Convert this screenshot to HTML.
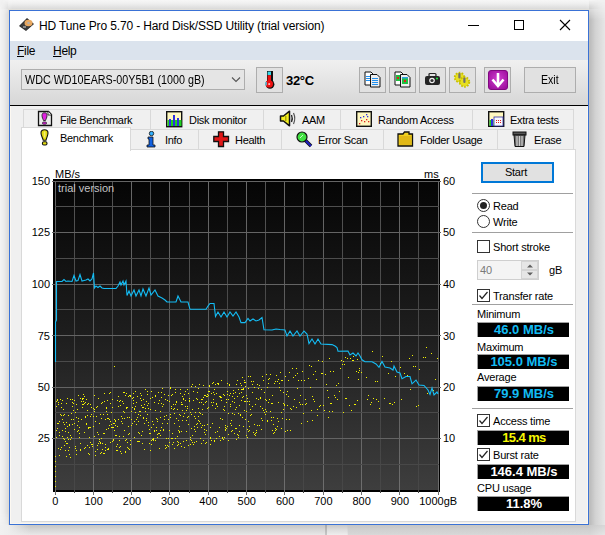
<!DOCTYPE html>
<html><head><meta charset="utf-8">
<style>
*{box-sizing:border-box;margin:0;padding:0}
html,body{width:605px;height:535px;overflow:hidden}
body{background:#f2f2f2;font-family:"Liberation Sans",sans-serif;font-size:12px;color:#000;position:relative}
.a{position:absolute}
.t{position:absolute;white-space:nowrap;line-height:1}
#win{position:absolute;left:9px;top:10px;width:580px;height:515px;border:1px solid #3a72d6;background:#f0f0f0;box-shadow:inset 1px 0 0 #fdf9f2,inset -1px -1px 0 #fbf7ef}
.tab{border:1px solid #d9d9d9;background:#f0f0f0}
.tl{font-size:11px;letter-spacing:-0.3px}
.cl{font-size:11px}
.sl{font-size:11px;letter-spacing:-0.2px}
.sep{left:472px;width:101px;height:1px;background:#a0a0a0}
.rad{width:13px;height:13px;border:1px solid #333;border-radius:50%;background:#fff}
.rad .dot{position:absolute;left:2px;top:2px;width:7px;height:7px;border-radius:50%;background:#222}
.chk{width:13px;height:13px;border:1px solid #333;background:#fff}
.chk svg{left:0;top:0}
.box{left:477px;width:92px;height:15px;background:#000;border-left:1px solid #a0a0a0;border-top:1px solid #a0a0a0}
.val{left:478px;width:92px;text-align:center;font-size:13px;font-weight:bold;letter-spacing:0px}
</style></head><body>
<div class="a" style="left:0;top:0;width:605px;height:9px;background:linear-gradient(#f7f7f7,#efefef 40%,#dadada);-webkit-mask-image:linear-gradient(to right,transparent 0px,#000 12px,#000 586px,transparent 602px);mask-image:linear-gradient(to right,transparent 0px,#000 12px,#000 586px,transparent 602px)"></div>
<div class="a" style="left:8px;top:9px;width:581px;height:1px;background:#e2dfd8"></div>
<div class="a" style="left:0;top:0;width:8px;height:535px;background:linear-gradient(to right,#f4f4f4,#ececec 50%,#dcdcdc);-webkit-mask-image:linear-gradient(transparent 0px,#000 14px,#000 512px,transparent 532px);mask-image:linear-gradient(transparent 0px,#000 14px,#000 512px,transparent 532px)"></div>
<div class="a" style="left:8px;top:9px;width:1px;height:516px;background:#dfdcd6"></div>
<div class="a" style="left:589px;top:0;width:16px;height:535px;background:linear-gradient(to right,#c2c0bb,#bdbdbd 8%,#d2d2d2 40%,#e6e6e6);-webkit-mask-image:linear-gradient(transparent 0px,#000 20px);mask-image:linear-gradient(transparent 0px,#000 20px)"></div>
<div class="a" style="left:0;top:525px;width:605px;height:10px;background:linear-gradient(#cbc9c3,#c9c9c9 12%,#d6d6d6 45%,#e8e8e8)"></div>
<div class="a" style="left:0;top:525px;width:30px;height:10px;background:linear-gradient(to right,#f1f1f1 0px,#eeeeee 8px,rgba(238,238,238,0) 30px)"></div>
<div class="a" style="left:589px;top:525px;width:16px;height:10px;background:linear-gradient(to bottom right,#c8c8c8,#e6e6e6)"></div>
<div class="a" style="left:325px;top:525px;width:2px;height:10px;background:rgba(0,0,0,0.14)"></div>
<div class="a" style="left:327px;top:525px;width:20px;height:10px;background:linear-gradient(rgba(255,255,255,0.05),rgba(255,255,255,0.25))"></div>
<div class="a" style="left:348px;top:525px;width:241px;height:10px;background:linear-gradient(rgba(0,0,0,0.0),rgba(0,0,0,0.07))"></div>
<div id="win"></div>
<!-- title bar -->
<div class="a" style="left:10px;top:11px;width:578px;height:30px;background:#fff"></div>
<svg class="a" style="left:18px;top:17px" width="17" height="15" viewBox="0 0 17 15">
 <polygon points="1,9 9,1 16,7 8,14" fill="#2a2a2a"/>
 <polygon points="2,9 9,2 15,7 8,13" fill="#3c3c3c"/>
 <ellipse cx="10.5" cy="6" rx="4" ry="3.3" fill="#e8a860"/>
 <ellipse cx="10.5" cy="6" rx="1.3" ry="1.1" fill="#b0b0b0"/>
 <rect x="5" y="9" width="3" height="2" fill="#888"/>
</svg>
<div class="t" style="left:39px;top:20px;letter-spacing:-0.13px">HD Tune Pro 5.70 - Hard Disk/SSD Utility (trial version)</div>
<div class="a" style="left:468px;top:25px;width:11px;height:1px;background:#000"></div>
<div class="a" style="left:514px;top:20px;width:10px;height:10px;border:1px solid #000"></div>
<svg class="a" style="left:559px;top:19px" width="12" height="12" viewBox="0 0 12 12"><path d="M1,1 L11,11 M11,1 L1,11" stroke="#000" stroke-width="1.1"/></svg>
<!-- menu bar -->
<div class="a" style="left:10px;top:41px;width:578px;height:19px;background:#dbe3ed"></div>
<div class="t" style="left:17px;top:45px;letter-spacing:-0.3px"><u>F</u>ile</div>
<div class="t" style="left:53px;top:45px;letter-spacing:-0.3px"><u>H</u>elp</div>
<!-- toolbar -->
<div class="a" style="left:10px;top:60px;width:578px;height:45px;background:linear-gradient(#f0f0f0,#d7d7d7)"></div>
<div class="a" style="left:10px;top:105px;width:578px;height:1px;background:#000"></div>
<!-- combo -->
<div class="a" style="left:21px;top:69px;width:224px;height:21px;border:1px solid #adadad;background:#e5e5e5"></div>
<div class="t" style="left:25px;top:74px;transform:scaleX(0.895);transform-origin:0 0">WDC WD10EARS-00Y5B1 (1000 gB)</div>
<svg class="a" style="left:231px;top:76px" width="10" height="7" viewBox="0 0 10 7"><path d="M1,1.5 L5,5.5 L9,1.5" fill="none" stroke="#555" stroke-width="1.1"/></svg>
<!-- thermometer button -->
<div class="a" style="left:256px;top:67px;width:27px;height:26px;border:1px solid #adadad;background:#e1e1e1"></div>
<svg class="a" style="left:264px;top:70px" width="12" height="19" viewBox="0 0 12 19">
 <rect x="3" y="1" width="6" height="12" fill="#111"/>
 <circle cx="6" cy="14.3" r="4.4" fill="#111"/>
 <rect x="3.6" y="1.6" width="3.4" height="3.6" fill="#38d8e8"/>
 <rect x="3.6" y="5.2" width="3.4" height="8" fill="#ee1010"/>
 <circle cx="5.3" cy="13.9" r="3.7" fill="#ee1010"/>
 <rect x="1.2" y="12" width="1.6" height="3.4" fill="#50c8e0"/>
 <rect x="4.3" y="13.4" width="1.8" height="1.3" fill="#fff"/>
</svg>
<div class="t" style="left:286px;top:74px;font-size:13px;font-weight:bold;letter-spacing:-0.3px">32°C</div>
<!-- toolbar buttons -->
<div class="a" style="left:359px;top:67px;width:27px;height:26px;border:1px solid #adadad;background:#e1e1e1"></div>
<div class="a" style="left:389px;top:67px;width:27px;height:26px;border:1px solid #adadad;background:#e1e1e1"></div>
<div class="a" style="left:419px;top:67px;width:27px;height:26px;border:1px solid #adadad;background:#e1e1e1"></div>
<div class="a" style="left:449px;top:67px;width:27px;height:26px;border:1px solid #adadad;background:#e1e1e1"></div>
<div class="a" style="left:484px;top:67px;width:27px;height:26px;border:1px solid #adadad;background:#e1e1e1"></div>
<div class="a" style="left:524px;top:67px;width:52px;height:26px;border:1px solid #adadad;background:#e1e1e1"></div>
<div class="t" style="left:541px;top:74px;transform:scaleX(0.88);transform-origin:0 0">Exit</div>
<!-- icon copy text -->
<svg class="a" style="left:364px;top:71px" width="18" height="17" viewBox="0 0 18 17">
 <path d="M1,1 H7 L9,3 V14 H1 Z" fill="#fff" stroke="#111" stroke-width="1"/>
 <rect x="2" y="5" width="5" height="1" fill="#2090f0"/><rect x="2" y="7" width="5" height="1" fill="#2090f0"/><rect x="2" y="9" width="5" height="1" fill="#2090f0"/>
 <path d="M6.5,3.5 H13 L16,6.5 V16 H6.5 Z" fill="#eee" stroke="#111" stroke-width="1"/>
 <rect x="8" y="7" width="6" height="1" fill="#2090f0"/><rect x="8" y="9" width="6" height="1" fill="#2090f0"/><rect x="8" y="11" width="6" height="1" fill="#2090f0"/><rect x="8" y="13" width="6" height="1" fill="#2090f0"/>
</svg>
<!-- icon copy image -->
<svg class="a" style="left:394px;top:71px" width="18" height="17" viewBox="0 0 18 17">
 <path d="M1,1 H7 L9,3 V14 H1 Z" fill="#fff" stroke="#111" stroke-width="1"/>
 <rect x="2" y="4" width="5" height="6" fill="#20c040"/><rect x="3" y="6" width="2" height="2" fill="#e02020"/>
 <path d="M6.5,3.5 H13 L16,6.5 V16 H6.5 Z" fill="#eee" stroke="#111" stroke-width="1"/>
 <rect x="8" y="6" width="6" height="7" fill="#20c040"/><rect x="8" y="6" width="6" height="1.5" fill="#30a0e0"/><rect x="10" y="9" width="2" height="2" fill="#e02020"/>
</svg>
<!-- camera -->
<svg class="a" style="left:424px;top:72px" width="17" height="15" viewBox="0 0 17 15">
 <rect x="5" y="1.5" width="7" height="3" rx="1" fill="none" stroke="#222" stroke-width="1.2"/>
 <rect x="1" y="4" width="15" height="9" rx="2" fill="#252525"/>
 <circle cx="8" cy="8.5" r="2.8" fill="#f0f0f0"/><circle cx="8" cy="8.5" r="1.6" fill="#333"/>
 <circle cx="13" cy="6.5" r="1.1" fill="#20e040"/>
</svg>
<!-- gears -->
<svg class="a" style="left:453px;top:71px" width="19" height="18" viewBox="0 0 19 18">
 <circle cx="6.5" cy="6.5" r="4.6" fill="#e0d818" stroke="#c8c000" stroke-width="2.2" stroke-dasharray="1.6 1.3"/>
 <circle cx="6.5" cy="6.5" r="3.8" fill="#e8e020"/>
 <circle cx="11.5" cy="11" r="4.6" fill="#e0d818" stroke="#c8c000" stroke-width="2.2" stroke-dasharray="1.6 1.3"/>
 <circle cx="11.5" cy="11" r="3.8" fill="#e8e020"/>
 <rect x="5.3" y="2" width="2.2" height="5.5" rx="1" fill="#707070"/>
 <rect x="10.3" y="6.5" width="2.2" height="5.5" rx="1" fill="#707070"/>
</svg>
<!-- purple down -->
<svg class="a" style="left:488px;top:70px" width="20" height="20" viewBox="0 0 20 20">
 <defs><radialGradient id="pg" cx="0.5" cy="0.45" r="0.6"><stop offset="0" stop-color="#d040d0"/><stop offset="1" stop-color="#a010a0"/></radialGradient></defs>
 <rect x="0.5" y="0.5" width="19" height="19" rx="2.5" fill="url(#pg)" stroke="#800880" stroke-width="1"/>
 <path d="M10,3 V15" stroke="#fff" stroke-width="2.6"/>
 <path d="M4.5,9.5 L10,16 L15.5,9.5" stroke="#fff" stroke-width="2.6" fill="none" stroke-linejoin="miter"/>
</svg>

<!-- tabs row 1 -->
<div class="a tab" style="left:23px;top:109px;width:128px;height:21px"></div>
<div class="a tab" style="left:150px;top:109px;width:114px;height:21px"></div>
<div class="a tab" style="left:263px;top:109px;width:78px;height:21px"></div>
<div class="a tab" style="left:340px;top:109px;width:133px;height:21px"></div>
<div class="a tab" style="left:472px;top:109px;width:102px;height:21px"></div>
<!-- tabs row 2 -->
<div class="a tab" style="left:130px;top:129px;width:69px;height:21px"></div>
<div class="a tab" style="left:198px;top:129px;width:84px;height:21px"></div>
<div class="a tab" style="left:281px;top:129px;width:103px;height:21px"></div>
<div class="a tab" style="left:383px;top:129px;width:115px;height:21px"></div>
<div class="a tab" style="left:497px;top:129px;width:77px;height:21px"></div>
<!-- panel -->
<div class="a" style="left:21px;top:149px;width:555px;height:373px;border:1px solid #d9d9d9;background:#fff"></div>
<!-- selected tab -->
<div class="a" style="left:21px;top:127px;width:110px;height:24px;border:1px solid #d9d9d9;border-bottom:none;background:#fff"></div>
<!-- tab labels -->
<div class="t tl" style="left:60px;top:115px">File Benchmark</div>
<div class="t tl" style="left:189px;top:115px">Disk monitor</div>
<div class="t tl" style="left:302px;top:115px">AAM</div>
<div class="t tl" style="left:378px;top:115px">Random Access</div>
<div class="t tl" style="left:510px;top:115px">Extra tests</div>
<div class="t tl" style="left:60px;top:133px">Benchmark</div>
<div class="t tl" style="left:165px;top:135px">Info</div>
<div class="t tl" style="left:235px;top:135px">Health</div>
<div class="t tl" style="left:318px;top:135px">Error Scan</div>
<div class="t tl" style="left:420px;top:135px">Folder Usage</div>
<div class="t tl" style="left:534px;top:135px">Erase</div>
<!-- tab icons -->
<svg class="a" style="left:37px;top:110px" width="16" height="17" viewBox="0 0 16 17">
 <path d="M1.5,1.5 H11.5 L14.5,4.5 V15.5 H1.5 Z" fill="#ececec" stroke="#111" stroke-width="1.3"/>
 <path d="M11,1.5 V5 H14.5" fill="#fff" stroke="#111" stroke-width="0.8"/>
 <path d="M7.5,2.8 C9.5,2.8 10,4 10,5.5 C10,7.5 9,9 8.5,10.5 H6.5 C6,9 5,7.5 5,5.5 C5,4 5.5,2.8 7.5,2.8 Z" fill="#e020e0" stroke="#222" stroke-width="0.9"/>
 <rect x="5.5" y="12" width="4" height="2.2" rx="1" fill="#e020e0" stroke="#222" stroke-width="0.8"/>
</svg>
<svg class="a" style="left:40px;top:129px" width="10" height="17" viewBox="0 0 10 17">
 <path d="M4.5,0.8 C7,0.8 8,2 8,4 C8,6.5 6.5,9 6,11.2 H3.2 C2.7,9 1,6.5 1,4 C1,2 2,0.8 4.5,0.8 Z" fill="#e4dc10" stroke="#111" stroke-width="1.1"/>
 <rect x="3.8" y="2.5" width="1.6" height="6" fill="#f8f4a0" opacity="0.7"/>
 <rect x="2.4" y="12.8" width="4.6" height="3.2" rx="1.4" fill="#e4dc10" stroke="#111" stroke-width="1.1"/>
</svg>
<svg class="a" style="left:166px;top:111px" width="17" height="17" viewBox="0 0 17 17">
 <rect x="0.7" y="0.7" width="15" height="15" fill="#fff8c0" stroke="#111" stroke-width="1.4"/>
 <rect x="1.5" y="9" width="14" height="6" fill="#20d020"/>
 <rect x="3" y="8" width="2" height="7" fill="#3030e0"/><rect x="7" y="4" width="2" height="11" fill="#3030e0"/><rect x="11" y="7" width="2" height="8" fill="#3030e0"/>
</svg>
<svg class="a" style="left:146px;top:131px" width="11" height="17" viewBox="0 0 11 17">
 <circle cx="5.5" cy="2.5" r="2.2" fill="#30b0ff" stroke="#111" stroke-width="0.8"/>
 <path d="M2,6 H7 V14 H9 V16 H1 V14 H3 V8 H2 Z" fill="#1060e0" stroke="#111" stroke-width="0.8"/>
</svg>
<svg class="a" style="left:213px;top:131px" width="17" height="17" viewBox="0 0 17 17">
 <path d="M5.5,0.8 H10.5 V5.5 H15.5 V10.5 H10.5 V15.5 H5.5 V10.5 H0.8 V5.5 H5.5 Z" fill="#e01818" stroke="#111" stroke-width="1.3"/>
</svg>
<svg class="a" style="left:279px;top:110px" width="18" height="17" viewBox="0 0 18 17">
 <path d="M1.5,6 H4.5 L10.5,1.2 V15.8 L4.5,11 H1.5 Z" fill="#f4f020" stroke="#111" stroke-width="1.5" stroke-linejoin="round"/>
 <rect x="6" y="6" width="1.5" height="5" fill="#a8a010"/>
 <path d="M12.5,5 Q14,8.5 12.5,12" fill="none" stroke="#222" stroke-width="1.3"/>
 <path d="M14.5,3 Q17,8.5 14.5,14" fill="none" stroke="#555" stroke-width="1.2"/>
</svg>
<svg class="a" style="left:296px;top:131px" width="17" height="17" viewBox="0 0 17 17">
 <path d="M9,9 L15,15" stroke="#111" stroke-width="3.5"/>
 <path d="M9,9 L15,15" stroke="#2020c0" stroke-width="2"/>
 <circle cx="6" cy="6" r="5" fill="#40e040" stroke="#111" stroke-width="1.2"/>
 <path d="M4,7 L7,4" stroke="#c0ffc0" stroke-width="1"/>
</svg>
<svg class="a" style="left:356px;top:111px" width="16" height="16" viewBox="0 0 16 16">
 <rect x="0.7" y="0.7" width="14.6" height="14.6" fill="#fff8c0" stroke="#111" stroke-width="1.4"/>
 <g fill="#3030e0"><rect x="4" y="6" width="1.3" height="1.3"/><rect x="7" y="5" width="1.3" height="1.3"/><rect x="10" y="3" width="1.3" height="1.3"/><rect x="11" y="5" width="1.3" height="1.3"/></g>
 <g fill="#e02020"><rect x="3" y="12" width="1.3" height="1.3"/><rect x="5" y="9" width="1.3" height="1.3"/><rect x="8" y="10" width="1.3" height="1.3"/><rect x="10" y="8" width="1.3" height="1.3"/><rect x="12" y="10" width="1.3" height="1.3"/></g>
</svg>
<svg class="a" style="left:397px;top:131px" width="17" height="16" viewBox="0 0 17 16">
 <path d="M1,3 H6 L7.5,1 H12 V3 H15.5 V15 H1 Z" fill="#f0d020" stroke="#111" stroke-width="1.3"/>
 <rect x="2.5" y="5" width="11.5" height="9" fill="#e0b818"/>
</svg>
<svg class="a" style="left:488px;top:111px" width="17" height="16" viewBox="0 0 17 16">
 <rect x="0.7" y="0.7" width="15" height="14.6" fill="#fff8c0" stroke="#111" stroke-width="1.4"/>
 <rect x="1.5" y="9" width="4" height="6" fill="#20d020"/><rect x="3" y="8" width="2" height="7" fill="#3030e0"/>
 <rect x="6" y="6" width="9" height="9" fill="#f8f8ff" stroke="#3030a0" stroke-width="0.8"/>
 <g fill="#e02020"><rect x="8" y="9" width="1" height="1"/><rect x="10" y="9" width="1" height="1"/><rect x="12" y="9" width="1" height="1"/><rect x="8" y="11" width="1" height="1"/><rect x="10" y="11" width="1" height="1"/><rect x="12" y="11" width="1" height="1"/></g>
</svg>
<svg class="a" style="left:512px;top:131px" width="15" height="16" viewBox="0 0 15 16">
 <rect x="1" y="1" width="13" height="3" fill="#555" stroke="#111" stroke-width="1"/>
 <path d="M2,4 H13 L12,15.5 H3 Z" fill="#707070" stroke="#111" stroke-width="1"/>
 <path d="M5,5 V15 M7.5,5 V15 M10,5 V15" stroke="#cfcfcf" stroke-width="1.2"/>
</svg>

<svg class="a" style="left:40px;top:165px" width="430" height="345" viewBox="40 165 430 345">
<defs><linearGradient id="bg" x1="0" y1="0" x2="0" y2="1"><stop offset="0" stop-color="#050505"/><stop offset="0.5" stop-color="#1e1e1e"/><stop offset="1" stop-color="#3e3e3e"/></linearGradient><linearGradient id="mn" gradientUnits="userSpaceOnUse" x1="0" y1="181" x2="0" y2="490"><stop offset="0" stop-color="#545454"/><stop offset="0.5" stop-color="#464646"/><stop offset="1" stop-color="#474747"/></linearGradient><linearGradient id="mj" gradientUnits="userSpaceOnUse" x1="0" y1="181" x2="0" y2="490"><stop offset="0" stop-color="#686868"/><stop offset="0.5" stop-color="#585858"/><stop offset="1" stop-color="#6e6e6e"/></linearGradient></defs>
<rect x="53" y="179" width="387" height="313" fill="#000"/>
<rect x="55" y="181" width="384" height="309" fill="url(#bg)"/>
<line x1="55.5" y1="181" x2="55.5" y2="495" stroke="url(#mj)" stroke-width="1"/>
<line x1="74.5" y1="181" x2="74.5" y2="493" stroke="url(#mn)" stroke-width="1"/>
<line x1="93.5" y1="181" x2="93.5" y2="495" stroke="url(#mj)" stroke-width="1"/>
<line x1="112.5" y1="181" x2="112.5" y2="493" stroke="url(#mn)" stroke-width="1"/>
<line x1="131.5" y1="181" x2="131.5" y2="495" stroke="url(#mj)" stroke-width="1"/>
<line x1="150.5" y1="181" x2="150.5" y2="493" stroke="url(#mn)" stroke-width="1"/>
<line x1="169.5" y1="181" x2="169.5" y2="495" stroke="url(#mj)" stroke-width="1"/>
<line x1="189.5" y1="181" x2="189.5" y2="493" stroke="url(#mn)" stroke-width="1"/>
<line x1="208.5" y1="181" x2="208.5" y2="495" stroke="url(#mj)" stroke-width="1"/>
<line x1="227.5" y1="181" x2="227.5" y2="493" stroke="url(#mn)" stroke-width="1"/>
<line x1="246.5" y1="181" x2="246.5" y2="495" stroke="url(#mj)" stroke-width="1"/>
<line x1="265.5" y1="181" x2="265.5" y2="493" stroke="url(#mn)" stroke-width="1"/>
<line x1="284.5" y1="181" x2="284.5" y2="495" stroke="url(#mj)" stroke-width="1"/>
<line x1="303.5" y1="181" x2="303.5" y2="493" stroke="url(#mn)" stroke-width="1"/>
<line x1="323.5" y1="181" x2="323.5" y2="495" stroke="url(#mj)" stroke-width="1"/>
<line x1="342.5" y1="181" x2="342.5" y2="493" stroke="url(#mn)" stroke-width="1"/>
<line x1="361.5" y1="181" x2="361.5" y2="495" stroke="url(#mj)" stroke-width="1"/>
<line x1="380.5" y1="181" x2="380.5" y2="493" stroke="url(#mn)" stroke-width="1"/>
<line x1="399.5" y1="181" x2="399.5" y2="495" stroke="url(#mj)" stroke-width="1"/>
<line x1="418.5" y1="181" x2="418.5" y2="493" stroke="url(#mn)" stroke-width="1"/>
<line x1="438.5" y1="181" x2="438.5" y2="495" stroke="url(#mj)" stroke-width="1"/>
<line x1="52" y1="181.5" x2="441" y2="181.5" stroke="#646464" stroke-width="1"/>
<line x1="55" y1="206.5" x2="439" y2="206.5" stroke="#4f4f4f" stroke-width="1"/>
<line x1="52" y1="232.5" x2="441" y2="232.5" stroke="#646464" stroke-width="1"/>
<line x1="55" y1="258.5" x2="439" y2="258.5" stroke="#4d4d4d" stroke-width="1"/>
<line x1="52" y1="284.5" x2="441" y2="284.5" stroke="#646464" stroke-width="1"/>
<line x1="55" y1="309.5" x2="439" y2="309.5" stroke="#4c4c4c" stroke-width="1"/>
<line x1="52" y1="335.5" x2="441" y2="335.5" stroke="#646464" stroke-width="1"/>
<line x1="55" y1="361.5" x2="439" y2="361.5" stroke="#4b4b4b" stroke-width="1"/>
<line x1="52" y1="387.5" x2="441" y2="387.5" stroke="#646464" stroke-width="1"/>
<line x1="55" y1="412.5" x2="439" y2="412.5" stroke="#4a4a4a" stroke-width="1"/>
<line x1="52" y1="438.5" x2="441" y2="438.5" stroke="#646464" stroke-width="1"/>
<line x1="55" y1="464.5" x2="439" y2="464.5" stroke="#484848" stroke-width="1"/>
<path fill="#f4f400" d="M56 406h1v1h-1zM56 437h1v1h-1zM56 401h1v1h-1zM56 430h1v1h-1zM57 400h1v1h-1zM57 428h1v1h-1zM57 399h1v1h-1zM57 423h1v1h-1zM58 402h1v1h-1zM58 423h1v1h-1zM58 448h1v1h-1zM58 404h1v1h-1zM59 435h1v1h-1zM59 455h1v1h-1zM59 432h1v1h-1zM59 421h1v1h-1zM60 399h1v1h-1zM60 449h1v1h-1zM60 414h1v1h-1zM61 403h1v1h-1zM61 415h1v1h-1zM61 447h1v1h-1zM61 407h1v1h-1zM62 436h1v1h-1zM62 419h1v1h-1zM62 430h1v1h-1zM62 400h1v1h-1zM63 409h1v1h-1zM63 438h1v1h-1zM63 422h1v1h-1zM63 415h1v1h-1zM64 424h1v1h-1zM64 414h1v1h-1zM64 445h1v1h-1zM64 439h1v1h-1zM65 431h1v1h-1zM65 428h1v1h-1zM65 450h1v1h-1zM65 441h1v1h-1zM66 456h1v1h-1zM66 403h1v1h-1zM66 422h1v1h-1zM66 443h1v1h-1zM67 426h1v1h-1zM67 398h1v1h-1zM67 437h1v1h-1zM67 443h1v1h-1zM68 450h1v1h-1zM68 415h1v1h-1zM68 439h1v1h-1zM68 432h1v1h-1zM69 424h1v1h-1zM69 447h1v1h-1zM69 454h1v1h-1zM69 425h1v1h-1zM70 399h1v1h-1zM70 439h1v1h-1zM70 435h1v1h-1zM70 457h1v1h-1zM71 413h1v1h-1zM71 419h1v1h-1zM71 437h1v1h-1zM72 424h1v1h-1zM72 406h1v1h-1zM72 402h1v1h-1zM72 399h1v1h-1zM73 403h1v1h-1zM73 410h1v1h-1zM73 419h1v1h-1zM74 400h1v1h-1zM74 423h1v1h-1zM74 429h1v1h-1zM75 446h1v1h-1zM75 448h1v1h-1zM75 412h1v1h-1zM76 417h1v1h-1zM76 450h1v1h-1zM76 454h1v1h-1zM76 404h1v1h-1zM77 409h1v1h-1zM77 409h1v1h-1zM77 425h1v1h-1zM77 431h1v1h-1zM78 395h1v1h-1zM78 421h1v1h-1zM78 418h1v1h-1zM78 430h1v1h-1zM79 437h1v1h-1zM79 427h1v1h-1zM79 433h1v1h-1zM80 398h1v1h-1zM80 450h1v1h-1zM80 443h1v1h-1zM80 449h1v1h-1zM81 419h1v1h-1zM81 419h1v1h-1zM81 401h1v1h-1zM82 398h1v1h-1zM82 399h1v1h-1zM82 407h1v1h-1zM82 404h1v1h-1zM83 398h1v1h-1zM83 394h1v1h-1zM83 404h1v1h-1zM83 401h1v1h-1zM84 396h1v1h-1zM84 448h1v1h-1zM84 432h1v1h-1zM84 403h1v1h-1zM85 416h1v1h-1zM85 417h1v1h-1zM85 402h1v1h-1zM85 447h1v1h-1zM86 423h1v1h-1zM86 424h1v1h-1zM86 399h1v1h-1zM87 415h1v1h-1zM87 410h1v1h-1zM87 445h1v1h-1zM87 404h1v1h-1zM88 453h1v1h-1zM88 427h1v1h-1zM88 403h1v1h-1zM88 428h1v1h-1zM89 427h1v1h-1zM89 454h1v1h-1zM89 447h1v1h-1zM89 437h1v1h-1zM90 416h1v1h-1zM90 404h1v1h-1zM90 442h1v1h-1zM90 427h1v1h-1zM91 414h1v1h-1zM91 407h1v1h-1zM91 444h1v1h-1zM92 446h1v1h-1zM92 444h1v1h-1zM92 444h1v1h-1zM93 408h1v1h-1zM93 426h1v1h-1zM93 416h1v1h-1zM94 395h1v1h-1zM94 411h1v1h-1zM94 409h1v1h-1zM94 436h1v1h-1zM95 421h1v1h-1zM95 451h1v1h-1zM95 455h1v1h-1zM96 416h1v1h-1zM96 407h1v1h-1zM96 407h1v1h-1zM97 406h1v1h-1zM97 432h1v1h-1zM97 449h1v1h-1zM97 445h1v1h-1zM98 434h1v1h-1zM98 443h1v1h-1zM98 398h1v1h-1zM98 434h1v1h-1zM99 441h1v1h-1zM99 439h1v1h-1zM99 423h1v1h-1zM100 442h1v1h-1zM100 414h1v1h-1zM100 443h1v1h-1zM100 453h1v1h-1zM101 418h1v1h-1zM101 452h1v1h-1zM101 438h1v1h-1zM101 403h1v1h-1zM102 402h1v1h-1zM102 449h1v1h-1zM102 443h1v1h-1zM102 402h1v1h-1zM103 453h1v1h-1zM103 433h1v1h-1zM103 414h1v1h-1zM104 401h1v1h-1zM104 393h1v1h-1zM104 453h1v1h-1zM104 433h1v1h-1zM105 450h1v1h-1zM105 419h1v1h-1zM105 447h1v1h-1zM105 444h1v1h-1zM106 408h1v1h-1zM106 411h1v1h-1zM106 407h1v1h-1zM106 429h1v1h-1zM107 418h1v1h-1zM107 400h1v1h-1zM107 449h1v1h-1zM107 414h1v1h-1zM108 428h1v1h-1zM108 448h1v1h-1zM108 418h1v1h-1zM108 449h1v1h-1zM109 425h1v1h-1zM109 425h1v1h-1zM109 393h1v1h-1zM109 419h1v1h-1zM110 392h1v1h-1zM110 442h1v1h-1zM110 403h1v1h-1zM110 421h1v1h-1zM111 427h1v1h-1zM111 412h1v1h-1zM111 424h1v1h-1zM112 441h1v1h-1zM112 399h1v1h-1zM112 427h1v1h-1zM112 407h1v1h-1zM113 440h1v1h-1zM113 423h1v1h-1zM113 427h1v1h-1zM113 439h1v1h-1zM114 419h1v1h-1zM114 430h1v1h-1zM114 423h1v1h-1zM115 435h1v1h-1zM115 420h1v1h-1zM115 425h1v1h-1zM115 421h1v1h-1zM116 435h1v1h-1zM116 446h1v1h-1zM116 450h1v1h-1zM117 426h1v1h-1zM117 450h1v1h-1zM117 444h1v1h-1zM117 400h1v1h-1zM118 419h1v1h-1zM118 396h1v1h-1zM118 406h1v1h-1zM118 396h1v1h-1zM119 440h1v1h-1zM119 447h1v1h-1zM119 401h1v1h-1zM119 436h1v1h-1zM120 400h1v1h-1zM120 446h1v1h-1zM120 451h1v1h-1zM120 405h1v1h-1zM121 416h1v1h-1zM121 421h1v1h-1zM121 453h1v1h-1zM122 401h1v1h-1zM122 418h1v1h-1zM122 423h1v1h-1zM123 403h1v1h-1zM123 411h1v1h-1zM123 436h1v1h-1zM123 392h1v1h-1zM124 418h1v1h-1zM124 392h1v1h-1zM124 412h1v1h-1zM124 430h1v1h-1zM125 395h1v1h-1zM125 452h1v1h-1zM125 440h1v1h-1zM125 451h1v1h-1zM126 407h1v1h-1zM126 393h1v1h-1zM126 439h1v1h-1zM126 408h1v1h-1zM127 417h1v1h-1zM127 447h1v1h-1zM127 442h1v1h-1zM127 407h1v1h-1zM128 448h1v1h-1zM128 426h1v1h-1zM128 434h1v1h-1zM128 396h1v1h-1zM129 433h1v1h-1zM129 417h1v1h-1zM129 395h1v1h-1zM129 449h1v1h-1zM130 440h1v1h-1zM130 396h1v1h-1zM130 444h1v1h-1zM130 395h1v1h-1zM131 419h1v1h-1zM131 411h1v1h-1zM131 425h1v1h-1zM132 407h1v1h-1zM132 398h1v1h-1zM132 423h1v1h-1zM133 397h1v1h-1zM133 400h1v1h-1zM133 393h1v1h-1zM133 403h1v1h-1zM134 409h1v1h-1zM134 437h1v1h-1zM134 408h1v1h-1zM134 421h1v1h-1zM135 412h1v1h-1zM135 391h1v1h-1zM135 406h1v1h-1zM135 391h1v1h-1zM136 424h1v1h-1zM136 402h1v1h-1zM136 419h1v1h-1zM137 396h1v1h-1zM137 441h1v1h-1zM137 417h1v1h-1zM138 441h1v1h-1zM138 414h1v1h-1zM138 421h1v1h-1zM138 432h1v1h-1zM139 411h1v1h-1zM139 441h1v1h-1zM139 433h1v1h-1zM140 415h1v1h-1zM140 411h1v1h-1zM140 393h1v1h-1zM140 398h1v1h-1zM141 435h1v1h-1zM141 405h1v1h-1zM141 400h1v1h-1zM141 395h1v1h-1zM142 443h1v1h-1zM142 431h1v1h-1zM142 407h1v1h-1zM143 407h1v1h-1zM143 418h1v1h-1zM143 399h1v1h-1zM143 417h1v1h-1zM144 449h1v1h-1zM144 449h1v1h-1zM144 423h1v1h-1zM144 404h1v1h-1zM145 408h1v1h-1zM145 411h1v1h-1zM145 389h1v1h-1zM146 418h1v1h-1zM146 420h1v1h-1zM146 401h1v1h-1zM146 420h1v1h-1zM147 405h1v1h-1zM147 394h1v1h-1zM147 414h1v1h-1zM147 391h1v1h-1zM148 408h1v1h-1zM148 403h1v1h-1zM148 425h1v1h-1zM148 422h1v1h-1zM149 429h1v1h-1zM149 433h1v1h-1zM149 443h1v1h-1zM150 409h1v1h-1zM150 450h1v1h-1zM150 398h1v1h-1zM150 433h1v1h-1zM151 391h1v1h-1zM151 440h1v1h-1zM151 444h1v1h-1zM151 427h1v1h-1zM152 439h1v1h-1zM152 397h1v1h-1zM152 421h1v1h-1zM153 440h1v1h-1zM153 438h1v1h-1zM153 439h1v1h-1zM153 424h1v1h-1zM154 430h1v1h-1zM154 431h1v1h-1zM154 402h1v1h-1zM155 396h1v1h-1zM155 410h1v1h-1zM155 395h1v1h-1zM155 440h1v1h-1zM156 427h1v1h-1zM156 427h1v1h-1zM156 430h1v1h-1zM156 418h1v1h-1zM157 437h1v1h-1zM157 434h1v1h-1zM157 419h1v1h-1zM157 421h1v1h-1zM158 392h1v1h-1zM158 433h1v1h-1zM158 403h1v1h-1zM158 392h1v1h-1zM159 433h1v1h-1zM159 400h1v1h-1zM159 433h1v1h-1zM159 448h1v1h-1zM160 411h1v1h-1zM160 417h1v1h-1zM160 430h1v1h-1zM160 435h1v1h-1zM161 427h1v1h-1zM161 392h1v1h-1zM161 397h1v1h-1zM161 403h1v1h-1zM162 406h1v1h-1zM162 423h1v1h-1zM162 388h1v1h-1zM163 404h1v1h-1zM163 429h1v1h-1zM163 430h1v1h-1zM163 429h1v1h-1zM164 419h1v1h-1zM164 416h1v1h-1zM164 416h1v1h-1zM164 394h1v1h-1zM165 399h1v1h-1zM165 448h1v1h-1zM165 445h1v1h-1zM166 415h1v1h-1zM166 438h1v1h-1zM166 447h1v1h-1zM166 415h1v1h-1zM167 400h1v1h-1zM167 445h1v1h-1zM167 400h1v1h-1zM167 423h1v1h-1zM168 419h1v1h-1zM168 446h1v1h-1zM168 395h1v1h-1zM168 438h1v1h-1zM169 442h1v1h-1zM169 430h1v1h-1zM169 401h1v1h-1zM169 442h1v1h-1zM170 388h1v1h-1zM170 387h1v1h-1zM170 417h1v1h-1zM170 414h1v1h-1zM171 395h1v1h-1zM171 408h1v1h-1zM171 406h1v1h-1zM171 438h1v1h-1zM172 433h1v1h-1zM172 438h1v1h-1zM172 394h1v1h-1zM172 444h1v1h-1zM173 442h1v1h-1zM173 404h1v1h-1zM173 409h1v1h-1zM174 448h1v1h-1zM174 423h1v1h-1zM174 408h1v1h-1zM174 413h1v1h-1zM175 389h1v1h-1zM175 392h1v1h-1zM175 438h1v1h-1zM175 404h1v1h-1zM176 401h1v1h-1zM176 402h1v1h-1zM176 418h1v1h-1zM177 409h1v1h-1zM177 445h1v1h-1zM177 441h1v1h-1zM177 436h1v1h-1zM178 442h1v1h-1zM178 444h1v1h-1zM178 420h1v1h-1zM178 430h1v1h-1zM179 431h1v1h-1zM179 414h1v1h-1zM179 432h1v1h-1zM179 426h1v1h-1zM180 389h1v1h-1zM180 443h1v1h-1zM180 393h1v1h-1zM180 415h1v1h-1zM181 404h1v1h-1zM181 431h1v1h-1zM181 446h1v1h-1zM181 402h1v1h-1zM182 404h1v1h-1zM182 420h1v1h-1zM182 410h1v1h-1zM182 396h1v1h-1zM183 398h1v1h-1zM183 441h1v1h-1zM183 416h1v1h-1zM183 399h1v1h-1zM184 447h1v1h-1zM184 413h1v1h-1zM184 394h1v1h-1zM185 391h1v1h-1zM185 406h1v1h-1zM185 391h1v1h-1zM185 400h1v1h-1zM186 420h1v1h-1zM186 440h1v1h-1zM186 431h1v1h-1zM186 410h1v1h-1zM187 417h1v1h-1zM187 408h1v1h-1zM187 406h1v1h-1zM187 389h1v1h-1zM188 445h1v1h-1zM188 393h1v1h-1zM188 416h1v1h-1zM188 424h1v1h-1zM189 398h1v1h-1zM189 401h1v1h-1zM189 400h1v1h-1zM190 412h1v1h-1zM190 444h1v1h-1zM190 437h1v1h-1zM190 439h1v1h-1zM191 386h1v1h-1zM191 428h1v1h-1zM191 440h1v1h-1zM191 414h1v1h-1zM192 384h1v1h-1zM192 409h1v1h-1zM192 442h1v1h-1zM192 435h1v1h-1zM193 444h1v1h-1zM193 400h1v1h-1zM193 391h1v1h-1zM194 416h1v1h-1zM194 426h1v1h-1zM194 442h1v1h-1zM194 429h1v1h-1zM195 431h1v1h-1zM195 412h1v1h-1zM195 418h1v1h-1zM195 386h1v1h-1zM196 398h1v1h-1zM196 441h1v1h-1zM196 424h1v1h-1zM197 392h1v1h-1zM197 399h1v1h-1zM197 423h1v1h-1zM197 427h1v1h-1zM198 388h1v1h-1zM198 416h1v1h-1zM198 420h1v1h-1zM198 408h1v1h-1zM199 421h1v1h-1zM199 384h1v1h-1zM199 402h1v1h-1zM199 412h1v1h-1zM200 423h1v1h-1zM200 438h1v1h-1zM200 413h1v1h-1zM201 399h1v1h-1zM201 443h1v1h-1zM201 427h1v1h-1zM201 402h1v1h-1zM202 414h1v1h-1zM202 425h1v1h-1zM202 409h1v1h-1zM202 399h1v1h-1zM203 440h1v1h-1zM203 397h1v1h-1zM203 385h1v1h-1zM203 404h1v1h-1zM204 425h1v1h-1zM204 395h1v1h-1zM204 432h1v1h-1zM204 429h1v1h-1zM205 395h1v1h-1zM205 443h1v1h-1zM205 402h1v1h-1zM205 434h1v1h-1zM206 396h1v1h-1zM206 430h1v1h-1zM206 401h1v1h-1zM206 442h1v1h-1zM207 394h1v1h-1zM207 396h1v1h-1zM207 408h1v1h-1zM207 424h1v1h-1zM208 391h1v1h-1zM208 407h1v1h-1zM208 395h1v1h-1zM209 391h1v1h-1zM209 385h1v1h-1zM209 386h1v1h-1zM210 438h1v1h-1zM210 437h1v1h-1zM210 427h1v1h-1zM210 444h1v1h-1zM211 402h1v1h-1zM211 393h1v1h-1zM211 440h1v1h-1zM212 383h1v1h-1zM212 423h1v1h-1zM212 405h1v1h-1zM213 402h1v1h-1zM213 392h1v1h-1zM213 382h1v1h-1zM213 399h1v1h-1zM214 440h1v1h-1zM214 389h1v1h-1zM214 441h1v1h-1zM214 394h1v1h-1zM215 432h1v1h-1zM215 432h1v1h-1zM215 408h1v1h-1zM215 384h1v1h-1zM216 404h1v1h-1zM216 438h1v1h-1zM216 393h1v1h-1zM216 403h1v1h-1zM217 383h1v1h-1zM217 406h1v1h-1zM217 431h1v1h-1zM218 383h1v1h-1zM218 383h1v1h-1zM218 384h1v1h-1zM219 396h1v1h-1zM219 427h1v1h-1zM219 436h1v1h-1zM220 397h1v1h-1zM220 440h1v1h-1zM220 418h1v1h-1zM220 396h1v1h-1zM221 400h1v1h-1zM221 397h1v1h-1zM221 380h1v1h-1zM222 437h1v1h-1zM222 419h1v1h-1zM222 438h1v1h-1zM223 394h1v1h-1zM223 409h1v1h-1zM223 439h1v1h-1zM223 439h1v1h-1zM224 395h1v1h-1zM224 406h1v1h-1zM224 410h1v1h-1zM224 437h1v1h-1zM225 429h1v1h-1zM225 425h1v1h-1zM225 430h1v1h-1zM225 427h1v1h-1zM226 399h1v1h-1zM226 399h1v1h-1zM226 402h1v1h-1zM226 428h1v1h-1zM227 391h1v1h-1zM227 426h1v1h-1zM227 394h1v1h-1zM227 383h1v1h-1zM228 413h1v1h-1zM228 399h1v1h-1zM228 440h1v1h-1zM228 434h1v1h-1zM229 395h1v1h-1zM229 384h1v1h-1zM229 385h1v1h-1zM230 423h1v1h-1zM230 406h1v1h-1zM230 393h1v1h-1zM230 404h1v1h-1zM231 420h1v1h-1zM231 425h1v1h-1zM231 431h1v1h-1zM231 420h1v1h-1zM232 430h1v1h-1zM232 396h1v1h-1zM232 413h1v1h-1zM232 401h1v1h-1zM233 390h1v1h-1zM233 393h1v1h-1zM233 393h1v1h-1zM234 433h1v1h-1zM234 414h1v1h-1zM234 398h1v1h-1zM234 402h1v1h-1zM235 409h1v1h-1zM235 392h1v1h-1zM235 428h1v1h-1zM236 439h1v1h-1zM236 384h1v1h-1zM236 407h1v1h-1zM236 428h1v1h-1zM237 434h1v1h-1zM237 380h1v1h-1zM237 396h1v1h-1zM238 389h1v1h-1zM238 437h1v1h-1zM238 413h1v1h-1zM238 435h1v1h-1zM239 431h1v1h-1zM239 405h1v1h-1zM239 393h1v1h-1zM239 425h1v1h-1zM240 383h1v1h-1zM240 414h1v1h-1zM240 415h1v1h-1zM241 400h1v1h-1zM241 385h1v1h-1zM241 389h1v1h-1zM241 392h1v1h-1zM242 417h1v1h-1zM242 389h1v1h-1zM242 377h1v1h-1zM242 397h1v1h-1zM243 388h1v1h-1zM243 396h1v1h-1zM243 389h1v1h-1zM243 426h1v1h-1zM244 380h1v1h-1zM244 382h1v1h-1zM244 401h1v1h-1zM244 410h1v1h-1zM245 382h1v1h-1zM245 386h1v1h-1zM245 419h1v1h-1zM245 401h1v1h-1zM246 395h1v1h-1zM246 435h1v1h-1zM246 395h1v1h-1zM246 411h1v1h-1zM247 401h1v1h-1zM247 429h1v1h-1zM247 437h1v1h-1zM247 398h1v1h-1zM248 421h1v1h-1zM248 388h1v1h-1zM248 376h1v1h-1zM248 431h1v1h-1zM249 426h1v1h-1zM249 401h1v1h-1zM249 430h1v1h-1zM249 404h1v1h-1zM250 376h1v1h-1zM250 409h1v1h-1zM250 415h1v1h-1zM251 381h1v1h-1zM251 414h1v1h-1zM252 406h1v1h-1zM252 384h1v1h-1zM252 392h1v1h-1zM253 432h1v1h-1zM253 381h1v1h-1zM254 424h1v1h-1zM254 434h1v1h-1zM254 387h1v1h-1zM255 433h1v1h-1zM255 435h1v1h-1zM255 404h1v1h-1zM256 432h1v1h-1zM256 398h1v1h-1zM256 430h1v1h-1zM257 425h1v1h-1zM257 384h1v1h-1zM258 388h1v1h-1zM258 399h1v1h-1zM259 425h1v1h-1zM259 385h1v1h-1zM260 398h1v1h-1zM260 406h1v1h-1zM260 397h1v1h-1zM261 389h1v1h-1zM261 418h1v1h-1zM261 429h1v1h-1zM262 408h1v1h-1zM262 420h1v1h-1zM262 376h1v1h-1zM263 380h1v1h-1zM263 410h1v1h-1zM264 412h1v1h-1zM264 392h1v1h-1zM265 409h1v1h-1zM265 399h1v1h-1zM265 414h1v1h-1zM266 400h1v1h-1zM266 374h1v1h-1zM266 411h1v1h-1zM267 387h1v1h-1zM267 420h1v1h-1zM267 421h1v1h-1zM268 383h1v1h-1zM268 402h1v1h-1zM268 379h1v1h-1zM269 399h1v1h-1zM269 378h1v1h-1zM269 399h1v1h-1zM270 374h1v1h-1zM270 411h1v1h-1zM271 417h1v1h-1zM271 420h1v1h-1zM271 403h1v1h-1zM272 403h1v1h-1zM272 395h1v1h-1zM272 430h1v1h-1zM273 424h1v1h-1zM273 433h1v1h-1zM273 417h1v1h-1zM274 383h1v1h-1zM274 432h1v1h-1zM275 430h1v1h-1zM275 428h1v1h-1zM275 381h1v1h-1zM276 429h1v1h-1zM276 375h1v1h-1zM277 418h1v1h-1zM277 381h1v1h-1zM277 426h1v1h-1zM278 421h1v1h-1zM278 379h1v1h-1zM278 402h1v1h-1zM279 383h1v1h-1zM279 387h1v1h-1zM280 390h1v1h-1zM280 372h1v1h-1zM281 380h1v1h-1zM281 428h1v1h-1zM281 412h1v1h-1zM282 380h1v1h-1zM282 418h1v1h-1zM283 403h1v1h-1zM283 409h1v1h-1zM283 392h1v1h-1zM284 404h1v1h-1zM284 405h1v1h-1zM285 376h1v1h-1zM285 431h1v1h-1zM286 394h1v1h-1zM286 419h1v1h-1zM287 430h1v1h-1zM287 405h1v1h-1zM287 391h1v1h-1zM288 396h1v1h-1zM288 380h1v1h-1zM289 372h1v1h-1zM289 419h1v1h-1zM290 408h1v1h-1zM290 430h1v1h-1zM291 409h1v1h-1zM292 368h1v1h-1zM293 377h1v1h-1zM293 406h1v1h-1zM294 399h1v1h-1zM295 375h1v1h-1zM296 407h1v1h-1zM296 368h1v1h-1zM297 388h1v1h-1zM297 373h1v1h-1zM298 380h1v1h-1zM299 402h1v1h-1zM300 404h1v1h-1zM300 395h1v1h-1zM301 423h1v1h-1zM301 380h1v1h-1zM302 371h1v1h-1zM302 404h1v1h-1zM303 413h1v1h-1zM304 380h1v1h-1zM305 404h1v1h-1zM305 399h1v1h-1zM306 403h1v1h-1zM307 421h1v1h-1zM308 378h1v1h-1zM309 365h1v1h-1zM310 387h1v1h-1zM311 366h1v1h-1zM311 410h1v1h-1zM312 396h1v1h-1zM312 420h1v1h-1zM313 374h1v1h-1zM313 399h1v1h-1zM314 401h1v1h-1zM315 371h1v1h-1zM316 379h1v1h-1zM317 415h1v1h-1zM317 409h1v1h-1zM318 360h1v1h-1zM319 406h1v1h-1zM320 405h1v1h-1zM321 373h1v1h-1zM322 373h1v1h-1zM322 361h1v1h-1zM323 405h1v1h-1zM324 410h1v1h-1zM325 374h1v1h-1zM326 384h1v1h-1zM327 390h1v1h-1zM328 397h1v1h-1zM328 417h1v1h-1zM329 411h1v1h-1zM329 358h1v1h-1zM330 371h1v1h-1zM330 403h1v1h-1zM331 403h1v1h-1zM332 411h1v1h-1zM333 371h1v1h-1zM334 395h1v1h-1zM335 397h1v1h-1zM336 385h1v1h-1zM337 399h1v1h-1zM338 383h1v1h-1zM339 391h1v1h-1zM340 368h1v1h-1zM341 360h1v1h-1zM342 364h1v1h-1zM343 361h1v1h-1zM343 412h1v1h-1zM344 364h1v1h-1zM345 357h1v1h-1zM345 398h1v1h-1zM346 398h1v1h-1zM347 358h1v1h-1zM348 377h1v1h-1zM349 405h1v1h-1zM350 358h1v1h-1zM351 410h1v1h-1zM352 360h1v1h-1zM353 360h1v1h-1zM353 356h1v1h-1zM354 404h1v1h-1zM355 404h1v1h-1zM356 371h1v1h-1zM357 359h1v1h-1zM357 400h1v1h-1zM358 372h1v1h-1zM358 379h1v1h-1zM359 368h1v1h-1zM359 370h1v1h-1zM361 372h1v1h-1zM366 377h1v1h-1zM367 399h1v1h-1zM368 395h1v1h-1zM370 404h1v1h-1zM371 402h1v1h-1zM372 351h1v1h-1zM373 398h1v1h-1zM375 381h1v1h-1zM376 399h1v1h-1zM377 381h1v1h-1zM378 401h1v1h-1zM379 408h1v1h-1zM380 363h1v1h-1zM382 356h1v1h-1zM384 398h1v1h-1zM388 373h1v1h-1zM389 403h1v1h-1zM390 403h1v1h-1zM391 361h1v1h-1zM392 404h1v1h-1zM394 402h1v1h-1zM395 376h1v1h-1zM400 367h1v1h-1zM401 399h1v1h-1zM404 373h1v1h-1zM407 375h1v1h-1zM409 358h1v1h-1zM410 389h1v1h-1zM412 355h1v1h-1zM413 366h1v1h-1zM415 366h1v1h-1zM416 406h1v1h-1zM418 405h1v1h-1zM419 369h1v1h-1zM423 357h1v1h-1zM425 357h1v1h-1zM426 347h1v1h-1zM427 393h1v1h-1zM431 353h1v1h-1zM433 390h1v1h-1zM435 379h1v1h-1zM437 358h1v1h-1zM55 456h1v1h-1zM55 461h1v1h-1zM55 466h1v1h-1zM55 471h1v1h-1zM55 476h1v1h-1zM55 481h1v1h-1zM55 486h1v1h-1zM114 366h1v1h-1z"/>
<polyline fill="none" stroke="#14bcf4" stroke-width="1.1" stroke-linejoin="miter" points="55.5,362 55.5,322 56.5,320 56.5,281.5 62,281.5 64,279.5 66,281.5 68,281 72,281.5 74,275.5 76,281 78,280.5 80,274.5 82,281 86,280 88,279 90,281 92,279 93.5,273 94.5,288 96,286 98,287.5 100,286 102,288 104,288.5 116,288.5 118,286 120,282 121,285 123,281 124,285 126,281 127,295.5 129,291 131,296 134,290 136,296 139,290 141,296 143,289 146,296 149,288 151,295 155,290 158,296 162,298 165,300 167,302 176,302 178,296 181,302 188,302 190,309.3 206,309.3 208,306 210,303.5 214,303.5 215.5,316.5 218,312 221,317 224,312 227,317 230,312 233,316 236,312 239,317 241,322.6 245,322.6 248,318.5 250,321 253,319 256,321 259,320 262,317.5 264,329.8 272,330 276,329 280,329.5 285,330 287,336 290,331 293,336 297,331 300,336 304,331 307,334 309,343.6 312,339 315,344 318,339 321,344 332,344.6 335,346 337,347.6 338,351.2 348,351 350,355 353,353 356,356 358,353 360,356 362,359.8 365,361.8 372,361.8 376,364 379,367.3 382,361.5 385,367 390,368 393,370 394,366 397,372 400,373 402,378.8 406,376.5 410,376.5 412,383.8 416,380 419,385 424,385.5 428,390 430,394.5 432,388 434,395 437,392 438,394"/>
</svg>
<div class="t cl" style="right:555px;top:176px">150</div>
<div class="t cl" style="right:555px;top:227px">125</div>
<div class="t cl" style="right:555px;top:279px">100</div>
<div class="t cl" style="right:555px;top:331px">75</div>
<div class="t cl" style="right:555px;top:382px">50</div>
<div class="t cl" style="right:555px;top:433px">25</div>
<div class="t cl" style="left:443px;top:176px">60</div>
<div class="t cl" style="left:443px;top:227px">50</div>
<div class="t cl" style="left:443px;top:279px">40</div>
<div class="t cl" style="left:443px;top:331px">30</div>
<div class="t cl" style="left:443px;top:382px">20</div>
<div class="t cl" style="left:443px;top:433px">10</div>
<div class="t cl" style="left:15.4px;width:80px;text-align:center;top:496px">0</div>
<div class="t cl" style="left:53.7px;width:80px;text-align:center;top:496px">100</div>
<div class="t cl" style="left:92.0px;width:80px;text-align:center;top:496px">200</div>
<div class="t cl" style="left:130.2px;width:80px;text-align:center;top:496px">300</div>
<div class="t cl" style="left:168.5px;width:80px;text-align:center;top:496px">400</div>
<div class="t cl" style="left:206.8px;width:80px;text-align:center;top:496px">500</div>
<div class="t cl" style="left:245.1px;width:80px;text-align:center;top:496px">600</div>
<div class="t cl" style="left:283.4px;width:80px;text-align:center;top:496px">700</div>
<div class="t cl" style="left:321.6px;width:80px;text-align:center;top:496px">800</div>
<div class="t cl" style="left:359.9px;width:80px;text-align:center;top:496px">900</div>
<div class="t cl" style="left:398.2px;width:80px;text-align:center;top:496px">1000gB</div>
<div class="t cl" style="left:55px;top:169px">MB/s</div>
<div class="t cl" style="left:424px;top:169px">ms</div>
<div class="t cl" style="left:58px;top:183px;color:#c4c4c4">trial version</div>

<!-- sidebar -->
<div class="a" style="left:481px;top:162px;width:73px;height:21px;border:2px solid #0078d7;background:#e1e1e1"></div>
<div class="t sl" style="left:479px;width:74px;text-align:center;top:167px">Start</div>
<div class="a sep" style="top:193px"></div>
<div class="a rad" style="left:477px;top:199px"><div class="dot"></div></div>
<div class="t sl" style="left:493px;top:201px">Read</div>
<div class="a rad" style="left:477px;top:215px"></div>
<div class="t sl" style="left:493px;top:217px">Write</div>
<div class="a sep" style="top:232px"></div>
<div class="a chk" style="left:477px;top:240px"></div>
<div class="t sl" style="left:493px;top:242px">Short stroke</div>
<div class="a" style="left:477px;top:260px;width:62px;height:20px;border:1px solid #cfcfcf;background:#f4f4f4"></div>
<div class="a" style="left:521px;top:261px;width:17px;height:9px;background:#e6e6e6;border:1px solid #d4d4d4"></div>
<div class="a" style="left:521px;top:270px;width:17px;height:9px;background:#e6e6e6;border:1px solid #d4d4d4"></div>
<svg class="a" style="left:525px;top:262px" width="10" height="16" viewBox="0 0 10 16"><path d="M2,5.5 L5,2.5 L8,5.5 Z M2,10.5 L5,13.5 L8,10.5 Z" fill="#606060"/></svg>
<div class="t sl" style="left:480px;top:265px;color:#7a7a7a">40</div>
<div class="t sl" style="left:549px;top:265px">gB</div>
<div class="a chk" style="left:477px;top:289px"><svg width="11" height="11" viewBox="0 0 11 11" style="position:absolute;left:0;top:0"><path d="M1.5,5.5 L4,8.5 L9.5,2" fill="none" stroke="#222" stroke-width="1.2"/></svg></div>
<div class="t sl" style="left:493px;top:291px">Transfer rate</div>
<div class="a sep" style="top:304px"></div>
<div class="t sl" style="left:477px;top:309px">Minimum</div>
<div class="a box" style="top:322px"></div>
<div class="t val" style="top:323px;color:#12bcf4">46.0 MB/s</div>
<div class="t sl" style="left:477px;top:342px">Maximum</div>
<div class="a box" style="top:354px"></div>
<div class="t val" style="top:355px;color:#12bcf4">105.0 MB/s</div>
<div class="t sl" style="left:477px;top:372px">Average</div>
<div class="a box" style="top:386px"></div>
<div class="t val" style="top:387px;color:#12bcf4">79.9 MB/s</div>
<div class="a sep" style="top:408px"></div>
<div class="a chk" style="left:477px;top:414px"><svg width="11" height="11" viewBox="0 0 11 11" style="position:absolute;left:0;top:0"><path d="M1.5,5.5 L4,8.5 L9.5,2" fill="none" stroke="#222" stroke-width="1.2"/></svg></div>
<div class="t sl" style="left:493px;top:416px">Access time</div>
<div class="a box" style="top:430px"></div>
<div class="t val" style="top:431px;color:#f8f800;letter-spacing:-0.6px">15.4 ms</div>
<div class="a chk" style="left:477px;top:448px"><svg width="11" height="11" viewBox="0 0 11 11" style="position:absolute;left:0;top:0"><path d="M1.5,5.5 L4,8.5 L9.5,2" fill="none" stroke="#222" stroke-width="1.2"/></svg></div>
<div class="t sl" style="left:493px;top:450px">Burst rate</div>
<div class="a box" style="top:464px"></div>
<div class="t val" style="top:465px;color:#fff">146.4 MB/s</div>
<div class="t sl" style="left:477px;top:483px">CPU usage</div>
<div class="a box" style="top:496px"></div>
<div class="t val" style="top:497px;color:#fff">11.8%</div>

</body></html>
